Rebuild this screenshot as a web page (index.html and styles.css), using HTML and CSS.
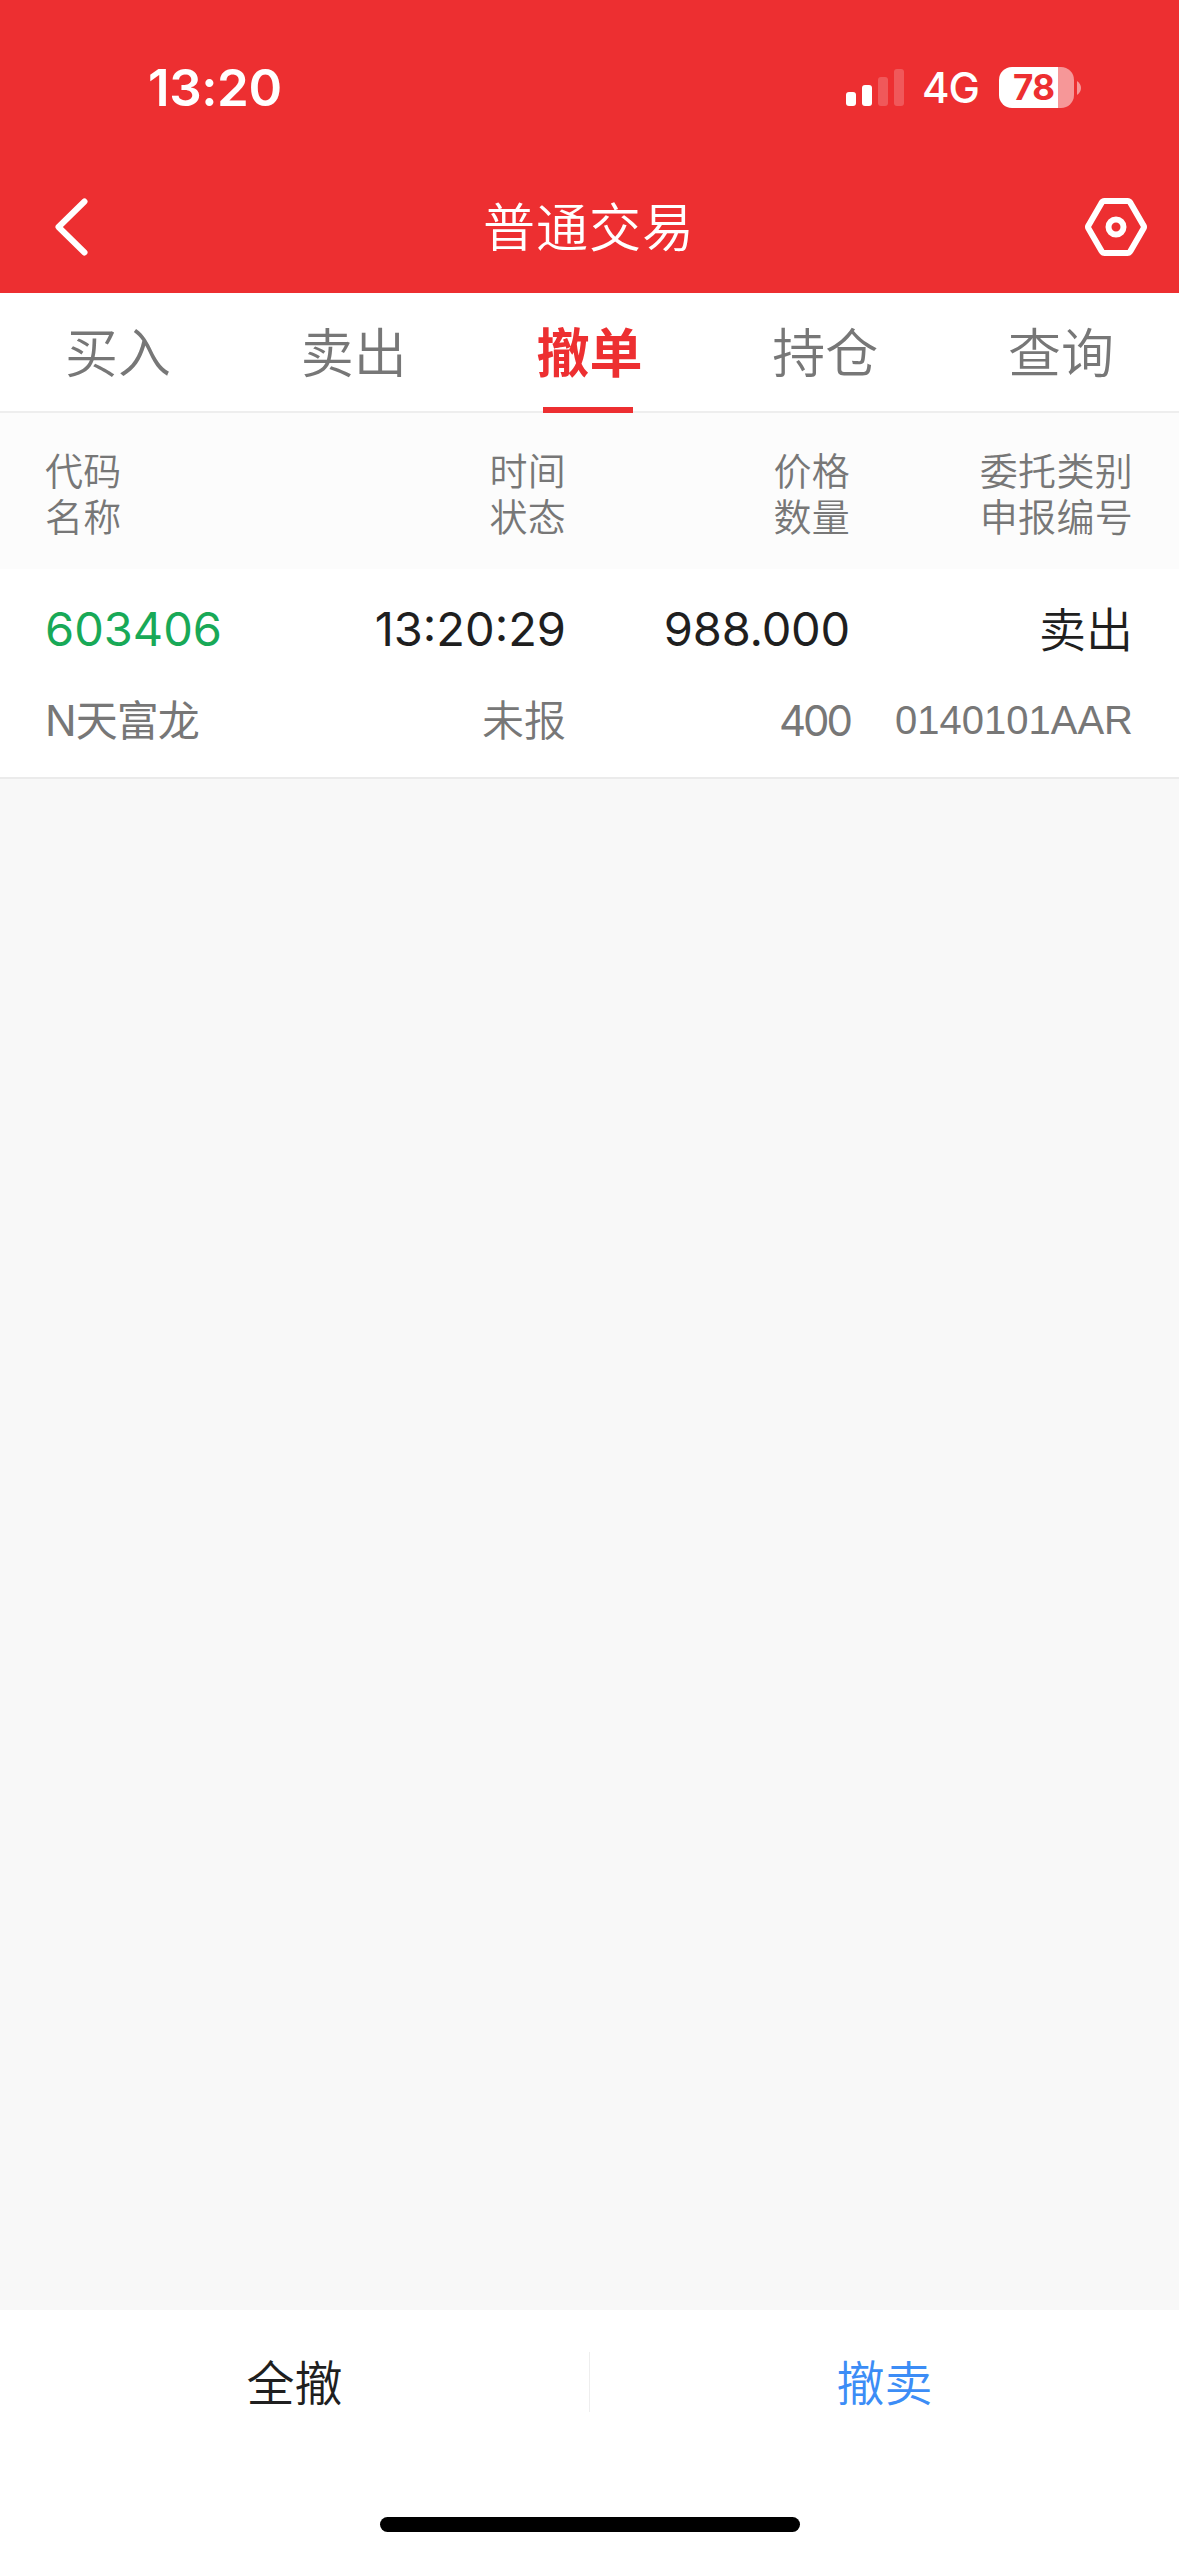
FILE: index.html
```html
<!DOCTYPE html>
<html lang="zh-CN">
<head>
    <meta charset="UTF-8">
    <meta name="viewport" content="width=device-width, initial-scale=1.0">
    <title>普通交易</title>
    <link rel="stylesheet" href="styles.css">
</head>
<body>
    <header>
        <!-- 状态栏 -->
        <div class="status-bar">
            <span class="clock">13:20</span>
            <div class="status-icons">
                <svg class="signal" width="58" height="37" viewBox="0 0 58 37" fill="#fff">
                    <rect x="0" y="23" width="10" height="14" rx="3"/>
                    <rect x="16" y="16" width="10" height="21" rx="3"/>
                    <rect x="32" y="8" width="10" height="29" rx="3" opacity="0.2"/>
                    <rect x="48" y="0" width="10" height="37" rx="3" opacity="0.2"/>
                </svg>
                <span class="network">4G</span>
                <div class="battery"><span class="level">78</span></div>
                <svg class="battery-cap" width="4" height="14" viewBox="0 0 4 14">
                    <path d="M0 0Q4 3 4 7Q4 11 0 14Z" fill="#fff" opacity="0.5"/>
                </svg>
            </div>
        </div>

        <!-- 标题栏 -->
        <div class="nav-bar">
            <svg class="back" width="33" height="58" viewBox="0 0 33 58">
                <path d="M29.5 3.5L3.5 29L29.5 54.5" fill="none" stroke="#fff" stroke-width="6" stroke-linecap="round" stroke-linejoin="round"/>
            </svg>
            <h1>普通交易</h1>
            <svg class="settings" width="64" height="60" viewBox="0 0 64 60" fill="none" stroke="#fff" stroke-width="6" stroke-linejoin="round">
                <path d="M20.500 4H43.500Q45.500 4 46.500 6L59.500 28.500Q60.500 30 59.500 31.500L46.500 54Q45.500 56 43.500 56H20.500Q18.500 56 17.500 54L4.500 31.500Q3.500 30 4.500 28.500L17.500 6Q18.500 4 20.500 4Z"/>
                <circle cx="32" cy="30" r="7.500"/>
            </svg>
        </div>
    </header>

    <nav class="tabs">
        <div class="tab">买入</div>
        <div class="tab">卖出</div>
        <div class="tab active">撤单</div>
        <div class="tab">持仓</div>
        <div class="tab">查询</div>
    </nav>

    <!-- 委托列表 -->
    <main>
        <div class="row list-head">
            <div>代码<br>名称</div>
            <div>时间<br>状态</div>
            <div>价格<br>数量</div>
            <div>委托类别<br>申报编号</div>
        </div>
        <div class="row order">
            <div>
                <p class="main-text code">603406</p>
                <p class="sub-text name">N天富龙</p>
            </div>
            <div>
                <p class="main-text time">13:20:29</p>
                <p class="sub-text">未报</p>
            </div>
            <div>
                <p class="main-text price">988.000</p>
                <p class="sub-text amount">400</p>
            </div>
            <div>
                <p class="main-text side">卖出</p>
                <p class="sub-text order-no">0140101AAR</p>
            </div>
        </div>
    </main>

    <!-- 底部操作 -->
    <footer>
        <div class="actions">
            <div class="action">全撤</div>
            <div class="action sell">撤卖</div>
        </div>
        <div class="home-indicator"></div>
    </footer>
</body>
</html>
```

FILE: styles.css
```css
* {
    box-sizing: border-box;
}

body {
    display: flex;
    flex-direction: column;
    height: 2556px;
    margin: 0;
    font-family: Inter, "Noto Sans CJK SC", sans-serif;
    background-color: #f8f8f8;
    color: #1f1f1f;
}

header {
    height: 293px;
    background-color: #ed2f31;
    color: white;
}

.status-bar {
    display: flex;
    justify-content: space-between;
    align-items: center;
    height: 175px;
    padding: 0 98px 0 148px;
}

.clock {
    font-size: 51px;
    font-weight: 600;
    letter-spacing: -0.4px;
}

.status-icons {
    display: flex;
    align-items: center;
}

.network {
    margin-left: 18px;
    font-size: 42px;
    font-weight: 500;
    letter-spacing: -1px;
}

.battery {
    width: 75px;
    height: 41px;
    margin-left: 20px;
    padding-left: 14px;
    border-radius: 13px;
    background: linear-gradient(to right, #fff 59px, rgba(255, 255, 255, 0.5) 59px);
    color: #ed2f31;
    font-size: 35px;
    font-weight: 700;
    line-height: 41px;
    letter-spacing: -0.5px;
}

.battery-cap {
    margin-left: 3px;
}

.nav-bar {
    display: flex;
    justify-content: space-between;
    align-items: center;
    height: 104px;
    padding: 0 31px 0 55px;
}

.back {
    margin-right: 6px;
}

h1 {
    margin: 0;
    padding-bottom: 5px;
    font-size: 52px;
    font-weight: 350;
    letter-spacing: 1px;
}

.tabs {
    display: flex;
    height: 120px;
    border-bottom: 2px solid #eee;
    background-color: white;
}

.tab {
    position: relative;
    flex: 1;
    color: #777;
    font-size: 53px;
    font-weight: 350;
    line-height: 123px;
    text-align: center;
}

.tab.active {
    color: #ed2f31;
    font-weight: 700;
}

.tab.active::after {
    content: "";
    position: absolute;
    left: 71px;
    bottom: -2px;
    width: 90px;
    height: 6px;
    background-color: #ed2f31;
}

.row {
    display: grid;
    grid-template-columns: 241px 280px 284px 283px;
    padding: 0 46px 0 45px;
    text-align: right;
}

.row > div:first-child {
    text-align: left;
}

.list-head {
    height: 156px;
    padding-top: 35px;
    background-color: #fcfcfc;
    color: #777;
    font-size: 38px;
    font-weight: 350;
    line-height: 46px;
    letter-spacing: 0.3px;
}

.order {
    height: 210px;
    padding-top: 24px;
    border-bottom: 2px solid #ebebeb;
    background-color: white;
}

.order p {
    margin: 0;
    white-space: nowrap;
}

.main-text {
    height: 91px;
    font-size: 47px;
    line-height: 72px;
}

.sub-text {
    color: #777;
    font-size: 42px;
    font-weight: 350;
    line-height: 73px;
}

.code {
    color: #18a957;
}

.price {
    letter-spacing: -0.2px;
}

.side {
    font-weight: 350;
    line-height: 74px;
}

.name {
    font-weight: 400;
    letter-spacing: -1px;
}

.amount {
    font-weight: 400;
    letter-spacing: -3px;
}

.order-no {
    font-family: "Liberation Sans", sans-serif;
    font-size: 40px;
    line-height: 72px;
}

footer {
    height: 246px;
    margin-top: auto;
    background-color: white;
}

.actions {
    display: flex;
    height: 144px;
    padding-top: 42px;
}

.action {
    flex: 1;
    height: 60px;
    font-size: 48px;
    font-weight: 350;
    line-height: 63px;
    text-align: center;
}

.action.sell {
    border-left: 1px solid #eee;
    color: #3c8df6;
}

.home-indicator {
    width: 420px;
    height: 15px;
    margin: 63px auto 0;
    border-radius: 8px;
    background-color: black;
}
```
